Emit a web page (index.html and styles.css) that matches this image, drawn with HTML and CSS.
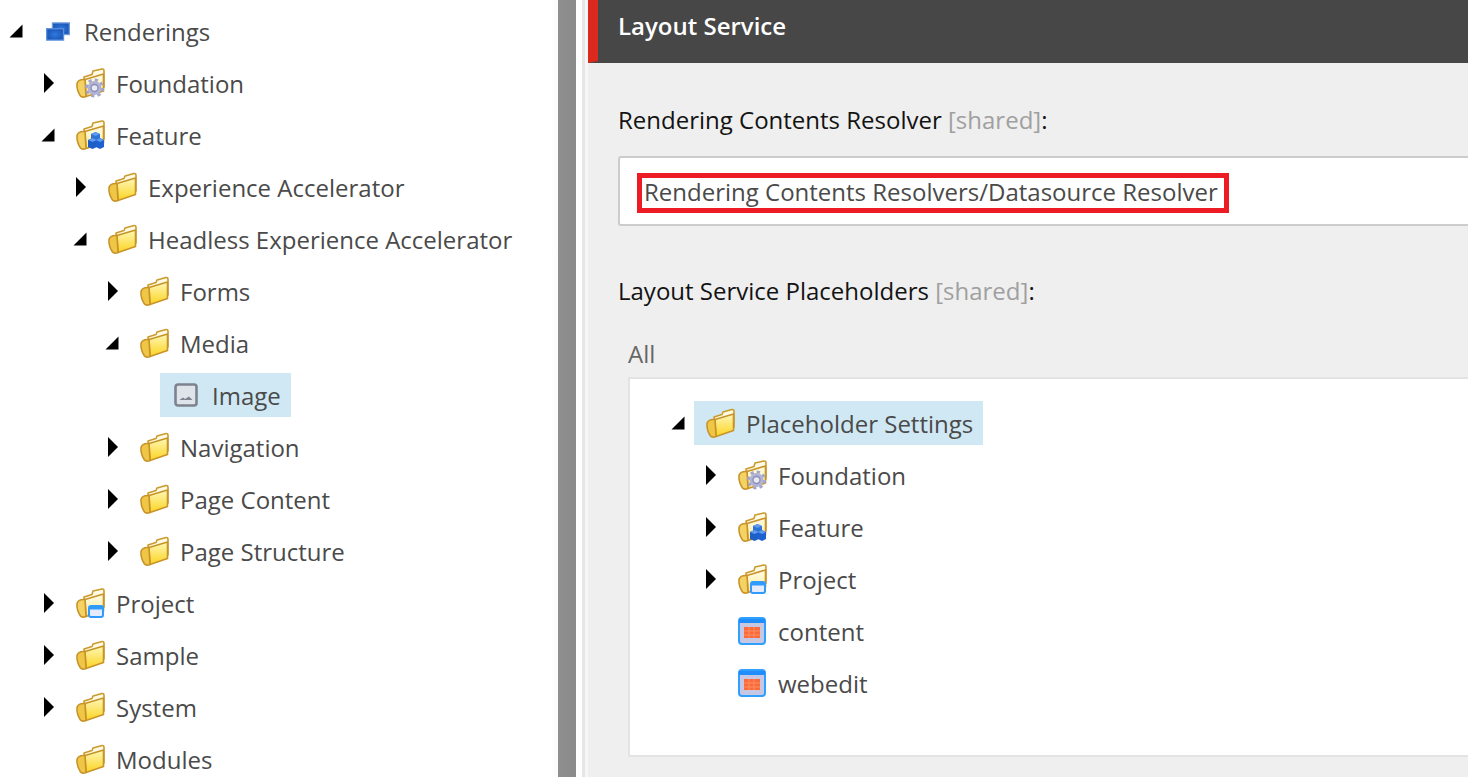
FILE: index.html
```html
<!DOCTYPE html>
<html lang="en">
<head>
<meta charset="utf-8">
<title>Layout Service</title>
<link rel="stylesheet" href="styles.css">
</head>
<body>
<svg class="defs" width="0" height="0" aria-hidden="true">
  <defs>
    <linearGradient id="fy" x1="0" y1="0" x2="0" y2="1"><stop offset="0" stop-color="#fff7b8"/><stop offset="1" stop-color="#fbd41f"/></linearGradient>
    <linearGradient id="fp" x1="0" y1="0" x2="0" y2="1"><stop offset="0" stop-color="#fffce6"/><stop offset="1" stop-color="#fcea98"/></linearGradient>
    <radialGradient id="bl"><stop offset="0" stop-color="#2f7ae0"/><stop offset="1" stop-color="#1c58b8"/></radialGradient>
    <symbol id="arrow-r" viewBox="0 0 12 20"><path d="M1 0 L11 10 L1 20 Z" fill="#000"/></symbol>
    <symbol id="arrow-d" viewBox="0 0 14 14"><path d="M13.500 .5 V13.500 H.5 Z" fill="#000"/></symbol>
    <symbol id="folder" viewBox="0 0 32 32">
      <path d="M10 10 L18 7.500 L19 5 L28 2.500 Q30 2.300 30 4.500 V20 L12 26 Z" fill="#fffbe2" stroke="#cb9a2c" stroke-width="1.600" stroke-linejoin="round"/>
      <path d="M11 12.500 L29.500 7 V23.500 L12 29.500 Z" fill="url(#fy)" stroke="#c8942a" stroke-width="1.600" stroke-linejoin="round"/>
      <path d="M3 16.500 Q4 12 11 12.500 L12 29.500 Q8 31 6.500 29 Q2.500 23 3 16.500 Z" fill="#f0c646" stroke="#c8942a" stroke-width="1.600" stroke-linejoin="round"/>
    </symbol>
    <symbol id="folder-back" viewBox="0 0 32 32">
      <path d="M10 10 L18 7.500 L19 4 L28 2 Q30 1.800 30 4 V20 L12 26 Z" fill="#fffbe6" stroke="#cb9a2c" stroke-width="1.600" stroke-linejoin="round"/>
      <path d="M11 12.500 L29.500 7 V24 L12 29.500 Z" fill="url(#fp)" stroke="#c8942a" stroke-width="1.600" stroke-linejoin="round"/>
      <path d="M3 16.500 Q4 12 11 12.500 L12 29.500 Q8 31 6.500 29 Q2.500 23 3 16.500 Z" fill="#f5d264" stroke="#c8942a" stroke-width="1.600" stroke-linejoin="round"/>
    </symbol>
    <symbol id="gear" viewBox="0 0 32 32">
      <circle cx="20.500" cy="21" r="8" fill="none" stroke="#a3a5cc" stroke-width="3" stroke-dasharray="3.200 3.080"/>
      <circle cx="20.500" cy="21" r="7" fill="#b2b4d6"/>
      <circle cx="20.500" cy="21" r="3.500" fill="#e9e9f2" stroke="#8d8fb8" stroke-width="1.400"/>
    </symbol>
    <symbol id="cubes" viewBox="0 0 32 32">
      <path d="M17 15 L21.500 13 L26 15 V20 L21.500 22 L17 20 Z" fill="#2f72d8"/>
      <path d="M14 21 L18.500 19 L23 21 V28 L18.500 30 L14 28 Z" fill="#1e5fc6"/>
      <path d="M22 21 L26 19 L30 21 V28 L26 30 L22 28 Z" fill="#1d61d0"/>
      <path d="M14 21 L18.500 19 L23 21 L18.500 23 Z M22 21 L26 19 L30 21 L26 23 Z M17 15 L21.500 13 L26 15 L21.500 17 Z" fill="#5f9bee"/>
    </symbol>
    <symbol id="window-badge" viewBox="0 0 32 32">
      <rect x="15" y="19" width="14" height="11" rx="2" fill="#e6ebfb" stroke="#2f9bff" stroke-width="2"/>
      <rect x="15" y="19" width="14" height="3.500" fill="#2f9bff"/>
    </symbol>
    <symbol id="renderings" viewBox="0 0 26 20">
      <rect x="7" y=".7" width="18.300" height="12.600" fill="url(#bl)" stroke="#6f9cdc" stroke-width="1.400"/>
      <rect x=".7" y="7" width="18.300" height="12.300" fill="url(#bl)" stroke="#5c90dc" stroke-width="1.400"/>
    </symbol>
    <symbol id="image" viewBox="0 0 24 24">
      <rect x="1.500" y="1.500" width="21" height="21" rx="2.500" fill="#dfe4ea" stroke="#7d828f" stroke-width="2.600"/>
      <path d="M5.500 17 L9 14.500 L11 16 L15 13.500 L18.500 17 Z" fill="#7d828f"/>
    </symbol>
    <symbol id="placeholder" viewBox="0 0 28 28">
      <rect x="1" y="1" width="26" height="26" rx="3" fill="#c6c7e3" stroke="#2fa0ff" stroke-width="2"/>
      <rect x="1" y="2" width="26" height="4" fill="#1f8dfb"/>
      <rect x="6" y="10" width="16" height="11" fill="#fb6a3a"/>
      <path d="M11 10 V21 M16 10 V21 M6 14 H22 M6 18 H22" stroke="#fb8f62" stroke-width="1"/>
    </symbol>
  </defs>
</svg>

<div class="app">
  <nav class="tree-pane">
    <ul class="tree">
      <li class="row level-0"><svg class="arrow down"><use href="#arrow-d"/></svg><span class="node"><svg class="icon small-icon"><use href="#renderings"/></svg>Renderings</span></li>
      <li class="row level-1"><svg class="arrow right"><use href="#arrow-r"/></svg><span class="node"><svg class="icon"><use href="#folder-back"/><use href="#gear"/></svg>Foundation</span></li>
      <li class="row level-1"><svg class="arrow down"><use href="#arrow-d"/></svg><span class="node"><svg class="icon"><use href="#folder-back"/><use href="#cubes"/></svg>Feature</span></li>
      <li class="row level-2"><svg class="arrow right"><use href="#arrow-r"/></svg><span class="node"><svg class="icon"><use href="#folder"/></svg>Experience Accelerator</span></li>
      <li class="row level-2"><svg class="arrow down"><use href="#arrow-d"/></svg><span class="node"><svg class="icon"><use href="#folder"/></svg>Headless Experience Accelerator</span></li>
      <li class="row level-3"><svg class="arrow right"><use href="#arrow-r"/></svg><span class="node"><svg class="icon"><use href="#folder"/></svg>Forms</span></li>
      <li class="row level-3"><svg class="arrow down"><use href="#arrow-d"/></svg><span class="node"><svg class="icon"><use href="#folder"/></svg>Media</span></li>
      <li class="row level-4"><span class="arrow"></span><span class="node selected"><svg class="icon image-icon"><use href="#image"/></svg>Image</span></li>
      <li class="row level-3"><svg class="arrow right"><use href="#arrow-r"/></svg><span class="node"><svg class="icon"><use href="#folder"/></svg>Navigation</span></li>
      <li class="row level-3"><svg class="arrow right"><use href="#arrow-r"/></svg><span class="node"><svg class="icon"><use href="#folder"/></svg>Page Content</span></li>
      <li class="row level-3"><svg class="arrow right"><use href="#arrow-r"/></svg><span class="node"><svg class="icon"><use href="#folder"/></svg>Page Structure</span></li>
      <li class="row level-1"><svg class="arrow right"><use href="#arrow-r"/></svg><span class="node"><svg class="icon"><use href="#folder-back"/><use href="#window-badge"/></svg>Project</span></li>
      <li class="row level-1"><svg class="arrow right"><use href="#arrow-r"/></svg><span class="node"><svg class="icon"><use href="#folder"/></svg>Sample</span></li>
      <li class="row level-1"><svg class="arrow right"><use href="#arrow-r"/></svg><span class="node"><svg class="icon"><use href="#folder"/></svg>System</span></li>
      <li class="row level-1"><span class="arrow"></span><span class="node"><svg class="icon"><use href="#folder"/></svg>Modules</span></li>
    </ul>
  </nav>

  <div class="splitter"></div>
  <div class="gutter"></div>

  <main class="editor">
    <header class="section-head"><h1 class="section-title">Layout Service</h1></header>
    <section class="section-body">
      <div class="field-label">Rendering Contents Resolver <span class="muted">[shared]</span>:</div>
      <div class="input">
        <span class="highlight">Rendering Contents Resolvers/Datasource Resolver</span>
      </div>
      <div class="field-label second">Layout Service Placeholders <span class="muted">[shared]</span>:</div>
      <div class="all">All</div>
      <div class="tree-box">
        <ul class="tree">
          <li class="row level-0"><svg class="arrow down"><use href="#arrow-d"/></svg><span class="node selected"><svg class="icon"><use href="#folder"/></svg>Placeholder Settings</span></li>
          <li class="row level-1"><svg class="arrow right"><use href="#arrow-r"/></svg><span class="node"><svg class="icon"><use href="#folder-back"/><use href="#gear"/></svg>Foundation</span></li>
          <li class="row level-1"><svg class="arrow right"><use href="#arrow-r"/></svg><span class="node"><svg class="icon"><use href="#folder-back"/><use href="#cubes"/></svg>Feature</span></li>
          <li class="row level-1"><svg class="arrow right"><use href="#arrow-r"/></svg><span class="node"><svg class="icon"><use href="#folder-back"/><use href="#window-badge"/></svg>Project</span></li>
          <li class="row level-1"><span class="arrow"></span><span class="node"><svg class="icon ph-icon"><use href="#placeholder"/></svg>content</span></li>
          <li class="row level-1"><span class="arrow"></span><span class="node"><svg class="icon ph-icon"><use href="#placeholder"/></svg>webedit</span></li>
        </ul>
      </div>
    </section>
  </main>
</div>
</body>
</html>
```

FILE: styles.css
```css
* { box-sizing: border-box; }
html, body { margin: 0; height: 100%; overflow: hidden; background: #fff; }
body { font-family: "Open Sans", "Noto Sans", sans-serif; font-size: 24px; color: #4a4a4a; }
.defs { position: absolute; }
.app { display: flex; width: 1468px; height: 777px; overflow: hidden; }

.tree-pane { flex: 0 0 558px; padding: 5px 0 0 8px; overflow: hidden; background: linear-gradient(to right, #fff 98.500%, #fbfbfb); }
.tree { list-style: none; margin: 0; padding: 0; }
.row { display: flex; align-items: center; height: 52px; white-space: nowrap; }
.level-1 { margin-left: 32px; }
.level-2 { margin-left: 64px; }
.level-3 { margin-left: 96px; }
.level-4 { margin-left: 128px; }
.arrow { flex: 0 0 24px; display: block; }
.arrow.right { flex: 0 0 12px; width: 12px; height: 20px; margin: 0 9px 0 3px; }
.arrow.down { flex: 0 0 14px; width: 14px; height: 14px; margin: 0 9px 0 1px; }
.node { display: flex; align-items: center; height: 44px; padding: 0 10px; }
.selected { background: #cfe8f3; }
.icon { flex: 0 0 32px; width: 32px; height: 32px; margin-right: 10px; }
.small-icon { height: 19px; padding: 0 4px; }
.image-icon { height: 24px; padding: 0 4px; }
.ph-icon { height: 28px; padding: 0 2px; }

.splitter { flex: 0 0 18px; background: linear-gradient(to right, #8f8f8f, #8a8a8a); }
.gutter { flex: 0 0 12px; background: linear-gradient(to right, #fff 0 6px, #e6e6e6 6px 9px, #f6f6f6 9px); }

.editor { flex: 1; min-width: 0; display: flex; flex-direction: column; background: #efefef; }
.section-head { flex: 0 0 63px; display: flex; align-items: center; padding-left: 20px; background: #474747; border-left: 10px solid #dc291e; border-bottom: 2px solid #474747; }
.section-title { margin: 0 0 8px; font-size: 24px; font-weight: 600; color: #fff; line-height: 1.2; }
.section-body { flex: 1; padding: 38px 0 0 30px; overflow: hidden; }
.field-label { line-height: 38px; color: #131313; }
.muted { color: #a0a0a0; }
.input { display: flex; align-items: flex-start; height: 70px; margin-top: 17px; padding: 15px 0 0 17px; background: #fff; border: 2px solid #ccc; border-right: 0; border-radius: 3px 0 0 3px; }
.highlight { display: block; width: 592px; height: 40px; line-height: 28px; padding-left: 2px; border: 5px solid #ed1c24; color: #4a4a4a; white-space: nowrap; }
.second { margin-top: 46px; }
.all { margin: 29px 0 0 10px; line-height: 30px; color: #666; }
.tree-box { width: 900px; height: 380px; margin: 8px 0 0 10px; padding: 18px 0 0 40px; background: #fff; border: 2px solid #e3e3e3; border-right: 0; }
```
